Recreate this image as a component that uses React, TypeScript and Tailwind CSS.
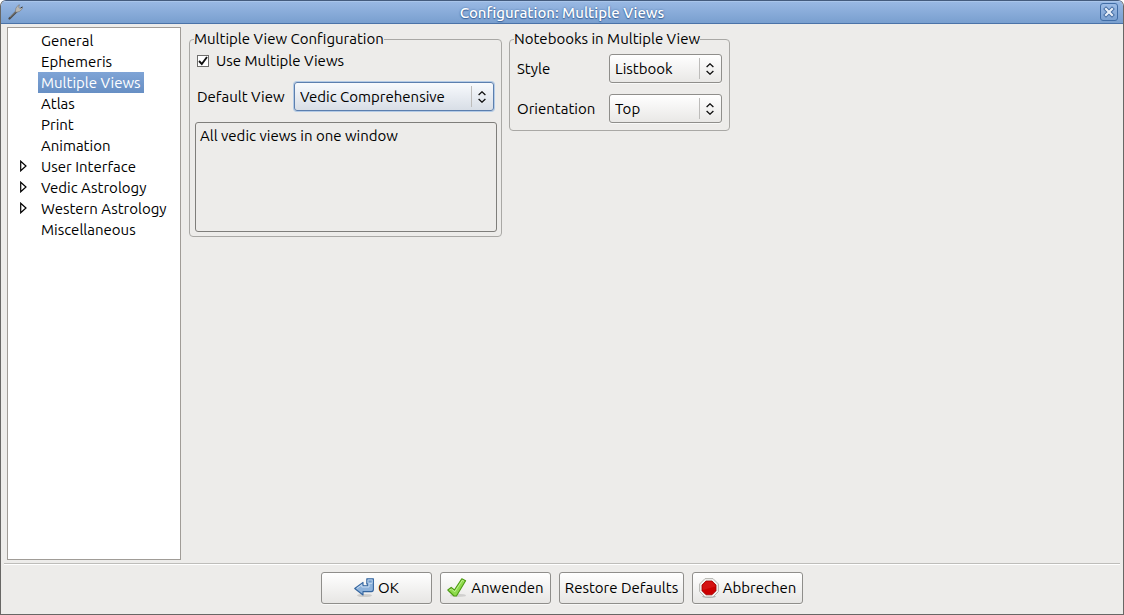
import { useState } from "react";
import type { ReactNode } from "react";

const TREE = [
  { name: "General" },
  { name: "Ephemeris" },
  { name: "Multiple Views" },
  { name: "Atlas" },
  { name: "Print" },
  { name: "Animation" },
  { name: "User Interface", branch: true },
  { name: "Vedic Astrology", branch: true },
  { name: "Western Astrology", branch: true },
  { name: "Miscellaneous" },
];

function WrenchIcon() {
  return (
    <svg className="h-4 w-4" viewBox="0 0 16 16" fill="none" aria-hidden="true">
      <path d="M2.5 14.5 L9.5 7.5" stroke="#4b4b4b" strokeWidth="2.2" strokeLinecap="round" />
      <path d="M3 13.2 L9.5 7" stroke="#8b8b87" strokeWidth="1" />
      <path d="M8.3 7.5 L8.9 4.2 L11 1.4 L12.6 .8 L11.6 3 L12.8 4.4 L15.4 3 L15.2 5 L12.6 7.4 L9.6 8.2 Z" fill="#b9b7b1" stroke="#77777a" strokeWidth=".6" />
      <path d="M13.7 3.9 L15.4 3" stroke="#333" strokeWidth="1" />
    </svg>
  );
}

function ReturnIcon() {
  return (
    <svg className="h-5 w-5" viewBox="0 0 20 20" aria-hidden="true">
      <ellipse cx="10.5" cy="17.5" rx="7.5" ry="1.6" fill="#000" opacity=".13" />
      <path d="M12.8 .7 H19.4 V11.6 Q19.4 13.6 17.4 13.6 H9 V17 L.7 10.5 L9 4.4 V7.8 H13.8 V6 H12.8 Z" fill="#8fb3db" stroke="#34659f" strokeWidth="1.1" strokeLinejoin="round" />
      <path d="M2.8 10.4 L7.8 6.8 V9 H15 V5.4 H18.2" fill="none" stroke="#c9dcf1" strokeWidth="1" />
      <path d="M14 2 H18.2 V5 H14 Z" fill="#6e99ca" stroke="#bcd3ec" strokeWidth=".8" />
    </svg>
  );
}

function ApplyIcon() {
  return (
    <svg className="h-5 w-5" viewBox="0 0 20 20" aria-hidden="true">
      <ellipse cx="11" cy="17.4" rx="8" ry="1.7" fill="#000" opacity=".12" />
      <path d="M.8 12 L4.2 9.4 L7.4 12 L14.8 .8 L18.6 2.8 L9.4 18 L7 18 Z" fill="#8edb4b" stroke="#4c9a12" strokeWidth="1.1" strokeLinejoin="round" />
      <path d="M2.6 12 L4.2 10.8 L7.8 13.8 L15.3 2.3 L17 3.2" fill="none" stroke="#c5f29a" strokeWidth=".9" />
    </svg>
  );
}

function StopIcon() {
  return (
    <svg className="h-5 w-5" viewBox="0 0 20 20" aria-hidden="true">
      <ellipse cx="10" cy="18.6" rx="7" ry="1.3" fill="#000" opacity=".25" />
      <path d="M6 .6 H14 L19.4 6 V13.6 L14 19 H6 L.6 13.6 V6 Z" fill="#f2f2f0" stroke="#b4b4b0" />
      <path d="M7 3 H13 L17 7 V12.8 L13 16.8 H7 L3 12.8 V7 Z" fill="#cc0000" stroke="#a00000" strokeWidth=".8" />
      <path d="M7.2 3.6 H12.8 L16.4 7.2 V8.5 L3.6 12 V7.2 Z" fill="#e03030" opacity=".4" />
    </svg>
  );
}

type ComboProps = {
  id: string;
  options: string[];
  focused?: boolean;
};

function Combo({ id, options, focused = false }: ComboProps) {
  return (
    <div className={focused ? "relative min-w-0 flex-1" : "relative w-[113px]"}>
      <select
        id={id}
        className={
          "block h-[29px] w-full appearance-none rounded-[3px] border pr-7 pl-[5px] outline-none " +
          (focused
            ? "border-[#5c7fae] bg-linear-to-b from-[#f8fafd] to-[#d8dee6] shadow-[0_0_0_1px_#b4cbe6]"
            : "border-[#8f8e8b] bg-linear-to-b from-white to-[#e9e8e6] shadow-[0_1px_0_#f8f8f7]")
        }
      >
        {options.map((o) => (
          <option key={o}>{o}</option>
        ))}
      </select>
      <span className="pointer-events-none absolute inset-y-1 right-0 flex w-[23px] items-center justify-center border-l border-[#bdbcba] pr-0.5">
        <svg className="h-3 w-2" viewBox="0 0 8 12" fill="none" stroke="#111" strokeWidth="1.3" aria-hidden="true">
          <path d="M.6 4 L4 .8 L7.4 4 M.6 8 L4 11.2 L7.4 8" />
        </svg>
      </span>
    </div>
  );
}

function Group({ title, className, children }: { title: string; className: string; children: ReactNode }) {
  return (
    <fieldset className={"rounded-[4px] border border-[#a9a8a5] " + className}>
      <legend className="-ml-px h-5 leading-5">{title}</legend>
      {children}
    </fieldset>
  );
}

function DialogButton({ className, icon, label }: { className: string; icon?: ReactNode; label: string }) {
  return (
    <button
      type="button"
      className={
        "flex h-8 items-center justify-center gap-1 whitespace-nowrap rounded-[3px] border border-[#8f8e8b] bg-linear-to-b from-white to-[#e7e6e4] shadow-[0_1px_0_#f8f8f7] " +
        className
      }
    >
      {icon}
      {label}
    </button>
  );
}

export default function App() {
  const [selected, setSelected] = useState("Multiple Views");
  const [multiple, setMultiple] = useState(true);

  return (
    <div className="bg-white font-['Ubuntu','Open_Sans',sans-serif] text-[15px] leading-5 text-black">
      <div className="flex min-h-screen flex-col overflow-hidden rounded-t-[6px] border border-[#686765] border-t-[#445b7d] bg-[#edecea]">
        <header className="flex h-[23px] items-center border-b border-[#4b73a8] bg-linear-to-b from-[#9ab9e4] to-[#799fcf] px-[5px] shadow-[inset_0_1px_0_#a9c5ea]">
          <div className="flex w-6 items-center pl-px">
            <WrenchIcon />
          </div>
          <h1 className="flex-1 pt-0.5 text-center font-medium text-white [text-shadow:0_0_2px_#3c659c,0_1px_1px_#3c659c]">
            Configuration: Multiple Views
          </h1>
          <div className="flex w-6 justify-end">
            <button
              type="button"
              aria-label="Close"
              className="flex h-[18px] w-[18px] items-center justify-center rounded-[3px] border border-[#416da6] bg-linear-to-b from-[#9dbce6] to-[#7ba1d1]"
            >
              <svg className="h-3 w-3" viewBox="0 0 12 12" aria-hidden="true">
                <path d="M3 3 L9 9 M9 3 L3 9" stroke="#426ba2" strokeWidth="4" strokeLinecap="square" />
                <path d="M3 3 L9 9 M9 3 L3 9" stroke="#e8eff8" strokeWidth="2.2" strokeLinecap="square" />
              </svg>
            </button>
          </div>
        </header>

        <main className="flex flex-1 items-start px-1.5 pt-[3px] pb-[3px]">
          <nav className="mr-2 w-[174px] shrink-0 self-stretch border border-[#a09c97] bg-white pt-0.5">
            <ul>
              {TREE.map((item) => (
                <li key={item.name} className="flex h-[21px] items-center pl-3">
                  <span className="flex w-[18px] shrink-0">
                    {item.branch && (
                      <svg className="mb-0.5 h-3 w-[7px]" viewBox="0 0 7 12" fill="white" stroke="black" strokeWidth="1.2" aria-hidden="true">
                        <path d="M.7 1.2 V10.8 L6 6 Z" />
                      </svg>
                    )}
                  </span>
                  <button
                    type="button"
                    onClick={() => setSelected(item.name)}
                    className={
                      "h-[21px] whitespace-nowrap px-[3px] " +
                      (selected === item.name ? "bg-linear-to-b from-[#7fa4d6] to-[#678fc4] text-white" : "")
                    }
                  >
                    {item.name}
                  </button>
                </li>
              ))}
            </ul>
          </nav>

          <Group title="Multiple View Configuration" className="mt-0.5 mr-[7px] w-[313px] pr-1 pb-1 pl-[5px]">
            <label className="flex h-6 items-center gap-[7px] pl-0.5">
              <input
                type="checkbox"
                checked={multiple}
                onChange={(e) => setMultiple(e.target.checked)}
                className="peer sr-only"
              />
              <span className="flex h-3 w-3 items-center justify-center border border-[#6f6e6c] bg-white peer-focus-visible:outline">
                {multiple && (
                  <svg className="h-2.5 w-2.5" viewBox="0 0 10 10" fill="none" stroke="#111" strokeWidth="1.9" aria-hidden="true">
                    <path d="M1 5 L3.8 8 L9 1" />
                  </svg>
                )}
              </span>
              Use Multiple Views
            </label>
            <div className="mt-[9px] flex items-center gap-2 pr-[3px] pl-0.5">
              <label htmlFor="default-view" className="w-[89px] whitespace-nowrap">
                Default View
              </label>
              <Combo id="default-view" options={["Vedic Comprehensive"]} focused />
            </div>
            <textarea
              aria-label="View description"
              readOnly
              value="All vedic views in one window"
              className="mt-[11px] block h-[110px] w-full resize-none rounded-[3px] border border-[#7f7e7b] bg-transparent px-1 py-[3px] outline-none"
            />
          </Group>

          <Group title="Notebooks in Multiple View" className="mt-0.5 w-[221px] px-[5px] pb-[7px]">
            <div className="flex flex-col gap-[11px] pt-[5px] pr-0.5 pl-0.5">
              <div className="flex items-center justify-between">
                <label htmlFor="style">Style</label>
                <Combo id="style" options={["Listbook"]} />
              </div>
              <div className="flex items-center justify-between">
                <label htmlFor="orientation">Orientation</label>
                <Combo id="orientation" options={["Top"]} />
              </div>
            </div>
          </Group>
        </main>

        <footer className="mx-[3px] flex justify-center gap-2 border-t border-[#bebdba] pt-2 pb-2.5 shadow-[inset_0_1px_0_white]">
          <DialogButton className="w-[111px]" icon={<ReturnIcon />} label="OK" />
          <DialogButton className="w-[111px]" icon={<ApplyIcon />} label="Anwenden" />
          <DialogButton className="w-[125px]" label="Restore Defaults" />
          <DialogButton className="w-[111px]" icon={<StopIcon />} label="Abbrechen" />
        </footer>
      </div>
    </div>
  );
}
